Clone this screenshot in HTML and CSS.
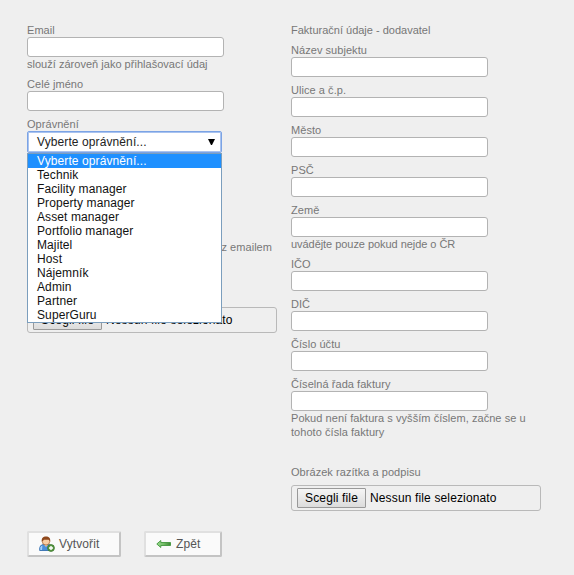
FILE: index.html
```html
<!DOCTYPE html>
<html lang="cs">
<head>
<meta charset="utf-8">
<title>Uživatel</title>
<link rel="stylesheet" href="styles.css">
</head>
<body>
<form class="form">
  <div class="columns">
    <div class="column">
      <div class="field"><label>Email</label><div class="input"></div><p class="help email-help">slouží zároveň jako přihlašovací údaj</p></div>
      <div class="field"><label>Celé jméno</label><div class="input"></div></div>
      <div class="field">
        <label>Oprávnění</label>
        <div class="select"><span>Vyberte oprávnění...</span><svg width="7" height="6" viewBox="0 0 7 6"><path d="M0 0H7L4 6H3Z"/></svg>
          <ul class="options">
            <li class="active">Vyberte oprávnění...</li>
            <li>Technik</li>
            <li>Facility manager</li>
            <li>Property manager</li>
            <li>Asset manager</li>
            <li>Portfolio manager</li>
            <li>Majitel</li>
            <li>Host</li>
            <li>Nájemník</li>
            <li>Admin</li>
            <li>Partner</li>
            <li>SuperGuru</li>
          </ul>
        </div>
      </div>
      <p class="help invite">vzkaz emailem</p>
      <div class="file"><span class="choose">Scegli file</span><span>Nessun file selezionato</span></div>
    </div>
    <div class="column">
      <p class="heading">Fakturační údaje - dodavatel</p>
      <div class="field"><label>Název subjektu</label><div class="input"></div></div>
      <div class="field"><label>Ulice a č.p.</label><div class="input"></div></div>
      <div class="field"><label>Město</label><div class="input"></div></div>
      <div class="field"><label>PSČ</label><div class="input"></div></div>
      <div class="field"><label>Země</label><div class="input"></div><p class="help country-help">uvádějte pouze pokud nejde o ČR</p></div>
      <div class="field"><label>IČO</label><div class="input"></div></div>
      <div class="field"><label>DIČ</label><div class="input"></div></div>
      <div class="field"><label>Číslo účtu</label><div class="input"></div></div>
      <div class="field"><label>Číselná řada faktury</label><div class="input"></div><p class="help">Pokud není faktura s vyšším číslem, začne se u<br>tohoto čísla faktury</p></div>
      <div class="field stamp"><label>Obrázek razítka a podpisu</label><div class="file"><span class="choose">Scegli file</span><span>Nessun file selezionato</span></div></div>
    </div>
  </div>
  <div class="actions">
    <div class="button create">
      <svg width="16" height="16" viewBox="0 0 16 16">
        <path d="M.7 14.5V12.2Q.8 9.2 4 8.5H10Q13 9.2 13.2 12V14.5Z" fill="#4b8fdb" stroke="#2864a8" stroke-width=".8"/>
        <path d="M1.3 11.5Q2 9.8 3.4 9.6L3 14H1.3Z" fill="#a5d0fa"/>
        <path d="M5 8.5H9L7 11Z" fill="#f4c9a0"/>
        <circle cx="7" cy="5.2" r="3.8" fill="#f8cda4" stroke="#a9642f" stroke-width=".7"/>
        <path d="M2.8 5.5C2.3 2 4.1.4 7 .4S11.7 2 11.2 5.5L9.8 3.8H5L3.8 5Z" fill="#8e481c"/>
        <circle cx="12" cy="12" r="3.4" fill="#5b9a44" stroke="#38752b" stroke-width=".8"/>
        <path d="M12 10V14M10 12H14" stroke="#fff" stroke-width="1.4"/>
      </svg><span>Vytvořit</span>
    </div>
    <div class="button back">
      <svg width="16" height="16" viewBox="0 0 16 16">
        <defs><linearGradient id="arrow"><stop offset="0" stop-color="#9ada91"/><stop offset=".5" stop-color="#72bd65"/><stop offset="1" stop-color="#3c8634"/></linearGradient></defs>
        <path d="M.8 8L4.8 4.5V6.5H14.5V9.5H4.8V11.5Z" fill="url(#arrow)" stroke="#43963e" stroke-width=".9"/>
      </svg><span>Zpět</span>
    </div>
  </div>
</form>
</body>
</html>
```
FILE: styles.css
```css
* { box-sizing: border-box; }
body {
  margin: 0;
  background: #efefef;
  color: #777;
  font: 11px/14px "Liberation Sans", Arial, sans-serif;
}
p, ul { margin: 0; padding: 0; }
.form { padding: 23px 0 0 27px; }
.columns { display: flex; gap: 14px; height: 508px; }
.column { width: 250px; }
.heading, .field { margin-bottom: 6px; }
label { display: block; letter-spacing: .05px; }
.help, .heading { white-space: nowrap; }
.help { letter-spacing: .05px; }
.email-help { letter-spacing: .02px; }
.country-help { letter-spacing: -.05px; }
.input {
  width: 197px;
  height: 20px;
  background: #fff;
  border: 1px solid #b3b3b3;
  border-radius: 3px;
}
.select {
  position: relative;
  display: flex;
  align-items: center;
  justify-content: space-between;
  width: 195px;
  height: 22px;
  padding: 0 6px 0 9px;
  background: #fff;
  border: 1px solid #7ba3e5;
  box-shadow: inset 0 0 0 1px #a9c3ef;
  border-radius: 2px;
  color: #222;
  font-size: 12px;
  letter-spacing: .1px;
}
.options {
  position: absolute;
  top: 21px;
  left: -1px;
  width: 195px;
  background: #fff;
  border: 1px solid #7b9ebd;
  list-style: none;
  color: #111;
}
.options li { padding-left: 9px; height: 14px; }
.options .active { background: #1e90ff; color: #fff; }
.invite { width: 245px; margin: 87px 0 53px; text-align: right; }
.file {
  display: flex;
  align-items: center;
  gap: 4px;
  width: 250px;
  height: 26px;
  padding-left: 5px;
  border: 1px solid #b9b9b9;
  border-radius: 3px;
  color: #000;
  font-size: 12px;
  letter-spacing: .14px;
  white-space: nowrap;
}
.choose {
  width: 69px;
  height: 20px;
  border: 1px solid #999;
  border-radius: 1px;
  background: linear-gradient(#f5f5f5, #dcdcdc);
  line-height: 18px;
  text-align: center;
}
.stamp { padding-top: 20px; }
.stamp .file { margin-top: 6px; }
.actions { display: flex; gap: 23px; }
.button {
  display: flex;
  align-items: center;
  gap: 4px;
  height: 26px;
  padding-left: 10px;
  background: #fafafa;
  border: 2px solid;
  border-color: #e0e0e0 #c4c4c4 #c4c4c4 #e0e0e0;
  border-radius: 2px;
  color: #555;
  font-size: 12px;
  letter-spacing: .1px;
}
.create { width: 94px; }
.back { width: 78px; }
```
